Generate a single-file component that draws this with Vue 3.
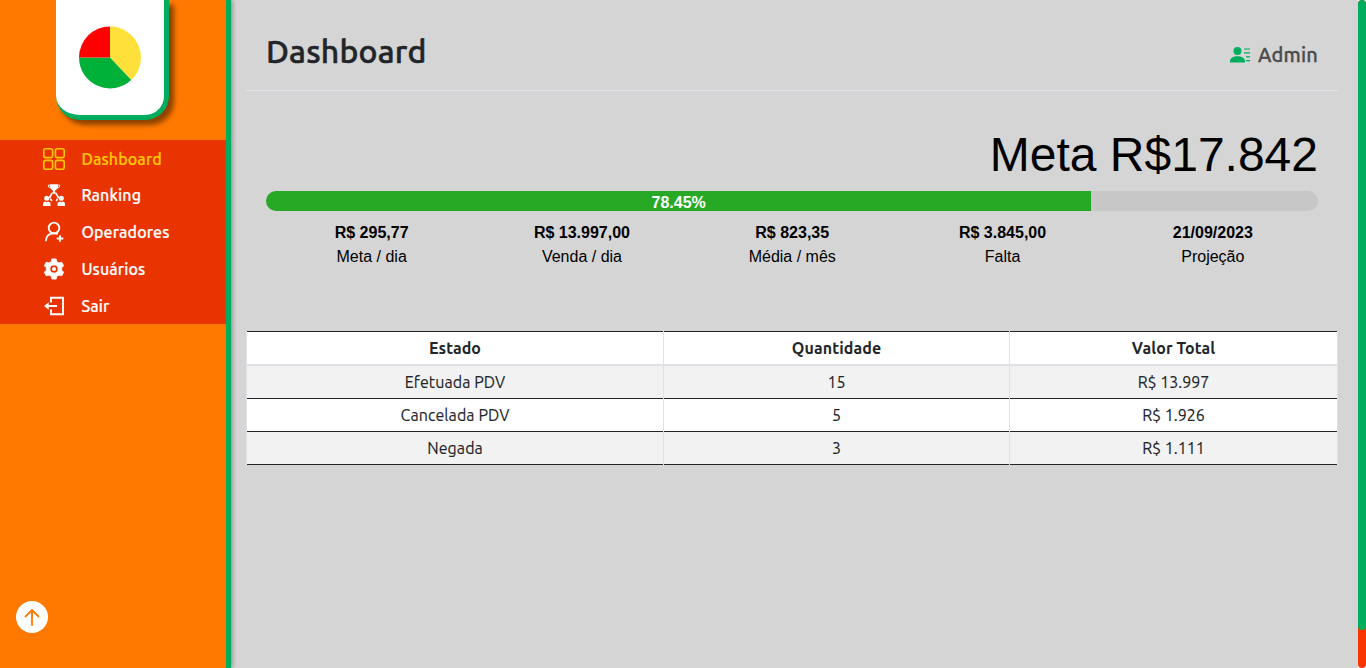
<script setup>
const menu = [
  { id: 'dashboard', label: 'Dashboard' },
  { id: 'ranking', label: 'Ranking' },
  { id: 'operators', label: 'Operadores' },
  { id: 'users', label: 'Usuários' },
  { id: 'exit', label: 'Sair' },
]
const percent = 78.45
const stats = [
  ['R$ 295,77', 'Meta / dia'],
  ['R$ 13.997,00', 'Venda / dia'],
  ['R$ 823,35', 'Média / mês'],
  ['R$ 3.845,00', 'Falta'],
  ['21/09/2023', 'Projeção'],
]
const rows = [
  ['Efetuada PDV', '15', 'R$ 13.997'],
  ['Cancelada PDV', '5', 'R$ 1.926'],
  ['Negada', '3', 'R$ 1.111'],
]
</script>

<template>
  <div class="page">
    <aside class="sidebar">
      <div class="logo">
        <svg width="64" height="64" viewBox="0 0 64 64">
          <path d="M32 31.500V.5A31 31 0 0 1 53.200 54Z" fill="#ffe03b" />
          <path d="M32 31.500L53.200 54A31 31 0 0 1 1 31.500Z" fill="#00b139" />
          <path d="M32 31.500H1A31 31 0 0 1 32 .5Z" fill="#f00" />
        </svg>
      </div>
      <nav class="menu">
        <a v-for="m in menu" :key="m.id" class="item" :class="[m.id, { active: m.id === 'dashboard' }]">
          <svg v-if="m.id === 'dashboard'" width="22" height="22" viewBox="0 0 22 22" fill="none" stroke="currentColor" stroke-width="1.600">
            <rect x=".8" y=".8" width="8.800" height="8.800" rx="2" />
            <rect x="12.400" y=".8" width="8.800" height="8.800" rx="2" />
            <rect x=".8" y="12.400" width="8.800" height="8.800" rx="2" />
            <rect x="12.400" y="12.400" width="8.800" height="8.800" rx="2" />
          </svg>
          <svg v-else-if="m.id === 'ranking'" width="22" height="22" viewBox="0 0 22 22" fill="currentColor">
            <path fill-rule="evenodd" d="M7 .2h8v.6h2.200c0 2-1.100 3.400-3 3.800-.5 1-1.200 1.700-2.100 2V8.500h1.500v1.300H8.400V8.500h1.500V6.600c-.9-.3-1.600-1-2.100-2-1.900-.4-3-1.800-3-3.800H7zM5.700 1.500c.2.900.6 1.500 1.400 1.900L6.900 1.500zm10.600 0h-1.200l-.2 1.900c.8-.4 1.200-1 1.400-1.900z" />
            <path d="M8.900 9.500L6.400 14M13.100 9.500l2.500 4.500M7.300 14.800l1.500 2.200M14.700 14.800l-1.500 2.200" stroke="currentColor" stroke-width="1.600" fill="none" />
            <circle cx="3.700" cy="14.200" r="2.500" /><circle cx="18.300" cy="14.200" r="2.500" />
            <path d="M0 22v-2.300c0-1.400 1.300-2 2.600-2.200l1.100 1 1.100-1c1.300.2 2.700.8 2.700 2.200V22zM14.500 22v-2.300c0-1.400 1.400-2 2.700-2.200l1.100 1 1.100-1c1.300.2 2.600.8 2.600 2.200V22z" />
          </svg>
          <svg v-else-if="m.id === 'operators'" width="22" height="22" viewBox="0 0 22 22" fill="none" stroke="currentColor" stroke-width="1.800">
            <circle cx="11" cy="7" r="5.300" />
            <path d="M2.800 20.200C3 14.900 6.300 12.300 11 12.300c1.300 0 2.600.2 3.700.8M17 14.200v6.600M13.700 17.500h6.600" />
          </svg>
          <svg v-else-if="m.id === 'users'" width="22" height="22" viewBox="0 0 22 22">
            <path fill="currentColor" stroke="currentColor" stroke-width=".8" stroke-linejoin="round" fill-rule="evenodd" d="M8.900.9h4.200l.7 2.800 2.200 1.200 2.700-.8 2 3.700-2 2v2.400l2 2-2 3.700-2.700-.8-2.200 1.200-.7 2.800H8.900l-.7-2.800L6 17.100l-2.700.8-2-3.700 2-2V9.800l-2-2 2-3.700 2.700.8 2.200-1.200zM11 6.900a4.100 4.100 0 1 0 0 8.200 4.100 4.100 0 0 0 0-8.200z" />
            <circle cx="11" cy="11" r="2" fill="currentColor" />
          </svg>
          <svg v-else width="22" height="22" viewBox="0 0 22 22" fill="none" stroke="currentColor" stroke-width="1.900">
            <path d="M8 7.500V2.700h12v16.600H8v-4.800M3 11h11" />
            <path d="M1 11l4.700-3.700v7.400z" fill="currentColor" stroke="none" />
          </svg>
          <span>{{ m.label }}</span>
        </a>
      </nav>
      <button class="top">
        <svg width="32" height="32" viewBox="0 0 32 32" fill="none" stroke="#ff7900" stroke-width="1.800" stroke-linecap="round">
          <path d="M16 24V9M9.500 15.500L16 9l6.500 6.500" />
        </svg>
      </button>
    </aside>

    <main class="main">
      <header class="head">
        <h1>Dashboard</h1>
        <div class="user">
          <svg width="20" height="16" viewBox="0 0 20 16" fill="#00ad5f">
            <circle cx="7.500" cy="4" r="4" />
            <path d="M0 15.500v-1.300C0 11 3.500 9.300 7.500 9.300s7.500 1.700 7.500 4.900v1.300zM14 1.400h6v1.200h-6zM14 5.200h6v1.200h-6zM16 9.300h4v1.200h-4zM16 13h4v1.200h-4z" />
          </svg>
          <span>Admin</span>
        </div>
      </header>

      <section class="goal">
        <div class="meta">Meta R$17.842</div>
        <div class="track"><div class="fill" :style="{ width: percent + '%' }">{{ percent }}%</div></div>
        <div class="stats">
          <div v-for="s in stats" :key="s[1]"><b>{{ s[0] }}</b><span>{{ s[1] }}</span></div>
        </div>
      </section>

      <table>
        <colgroup><col class="c1"><col class="c2"><col class="c3"></colgroup>
        <thead><tr><th>Estado</th><th>Quantidade</th><th>Valor Total</th></tr></thead>
        <tbody>
          <tr v-for="r in rows" :key="r[0]"><td v-for="c in r" :key="c">{{ c }}</td></tr>
        </tbody>
      </table>
    </main>

    <div class="scroll"><div class="thumb"></div></div>
  </div>
</template>

<style>
html, body { margin: 0; overflow: hidden; background: #fff; }
</style>

<style scoped>
* { box-sizing: border-box; }
.page { display: flex; width: 1366px; height: 668px; font-family: Ubuntu, "Noto Sans", sans-serif; }
.sidebar { flex: none; width: 231px; background: #ff7900; border-right: 5px solid #00ad5f; box-shadow: 1px 0 5px rgba(0, 0, 0, .4); z-index: 1; display: flex; flex-direction: column; }
.logo { width: 113px; height: 120px; flex: none; margin: 0 0 20px 56px; background: #fff; border: solid #00ad5f; border-width: 0 5px 5px 0; border-radius: 0 0 24px 24px; box-shadow: 5px 5px 5px rgba(0, 0, 0, .45); padding: 26px 0 0 22px; }
.logo svg { display: block; }
.menu { height: 184px; background: #e93300; display: grid; grid-template-rows: 37px 36px 37px 37px 37px; color: #fff; }
.item { display: flex; align-items: center; gap: 16.400px; padding-left: 43px; font-size: 16px; font-weight: 500; letter-spacing: .12px; -webkit-text-stroke: .2px currentColor; line-height: 24px; }
.item svg { flex: none; }
.active { color: #ffc800; padding-top: 1px; }
.top { margin: auto 0 35px 16px; width: 32px; height: 32px; padding: 0; border: 0; border-radius: 50%; background: #fff; }
.top svg { display: block; }
.main { flex: 1; background: #d5d5d5; padding: 0 20px 0 15px; }
.head { height: 91px; border-bottom: 1px solid #e1e1ed; display: flex; justify-content: space-between; padding: 0 20px 0 20px; }
h1 { margin: 32px 0 0; font-size: 32px; line-height: 38px; font-weight: 500; letter-spacing: .2px; -webkit-text-stroke: .5px currentColor; color: #212529; }
.user { display: flex; gap: 8px; margin-top: 40px; height: 30px; align-items: center; font-size: 20px; font-weight: 500; letter-spacing: .15px; -webkit-text-stroke: .3px currentColor; color: #4c4c4c; }
.user span { margin-top: -2px; }
.goal { padding: 32px 20px 0; font-family: "Liberation Sans", Arial, sans-serif; color: #000; height: 240px; }
.meta { font-size: 48px; line-height: 64px; height: 68px; text-align: right; }
.track { height: 20px; background: #c7c7c7; border-radius: 10px; overflow: hidden; }
.fill { height: 20px; background: #28a926; color: #fff; font-weight: 700; font-size: 16px; line-height: 24px; text-align: center; }
.stats { display: grid; grid-template-columns: repeat(5, 1fr); margin-top: 10px; padding-left: .5px; text-align: center; font-size: 16px; line-height: 24px; }
.stats b, .stats span { display: block; }
table { width: 1092px; table-layout: fixed; border-collapse: separate; border-spacing: 1px 0; background: #dee2e6; color: #212529; font-size: 16px; text-align: center; }
.c1 { width: 416px; } .c2 { width: 345px; } .c3 { width: 327px; }
th, td { padding: 0; background: #fff; line-height: 24px; }
th { height: 35px; border-top: 1px solid #212529; border-bottom: 2px solid #dee2e6; letter-spacing: .1px; }
td { height: 33px; border-bottom: 1px solid #212529; -webkit-text-stroke: .12px currentColor; }
td:first-child { letter-spacing: .08px; }
tbody tr:nth-child(odd) td { background: #f2f2f2; }
.scroll { flex: none; width: 8px; background: #f83500; border-radius: 4px; }
.thumb { height: 630px; border-radius: 4px; background: #00ad5f; }
</style>
